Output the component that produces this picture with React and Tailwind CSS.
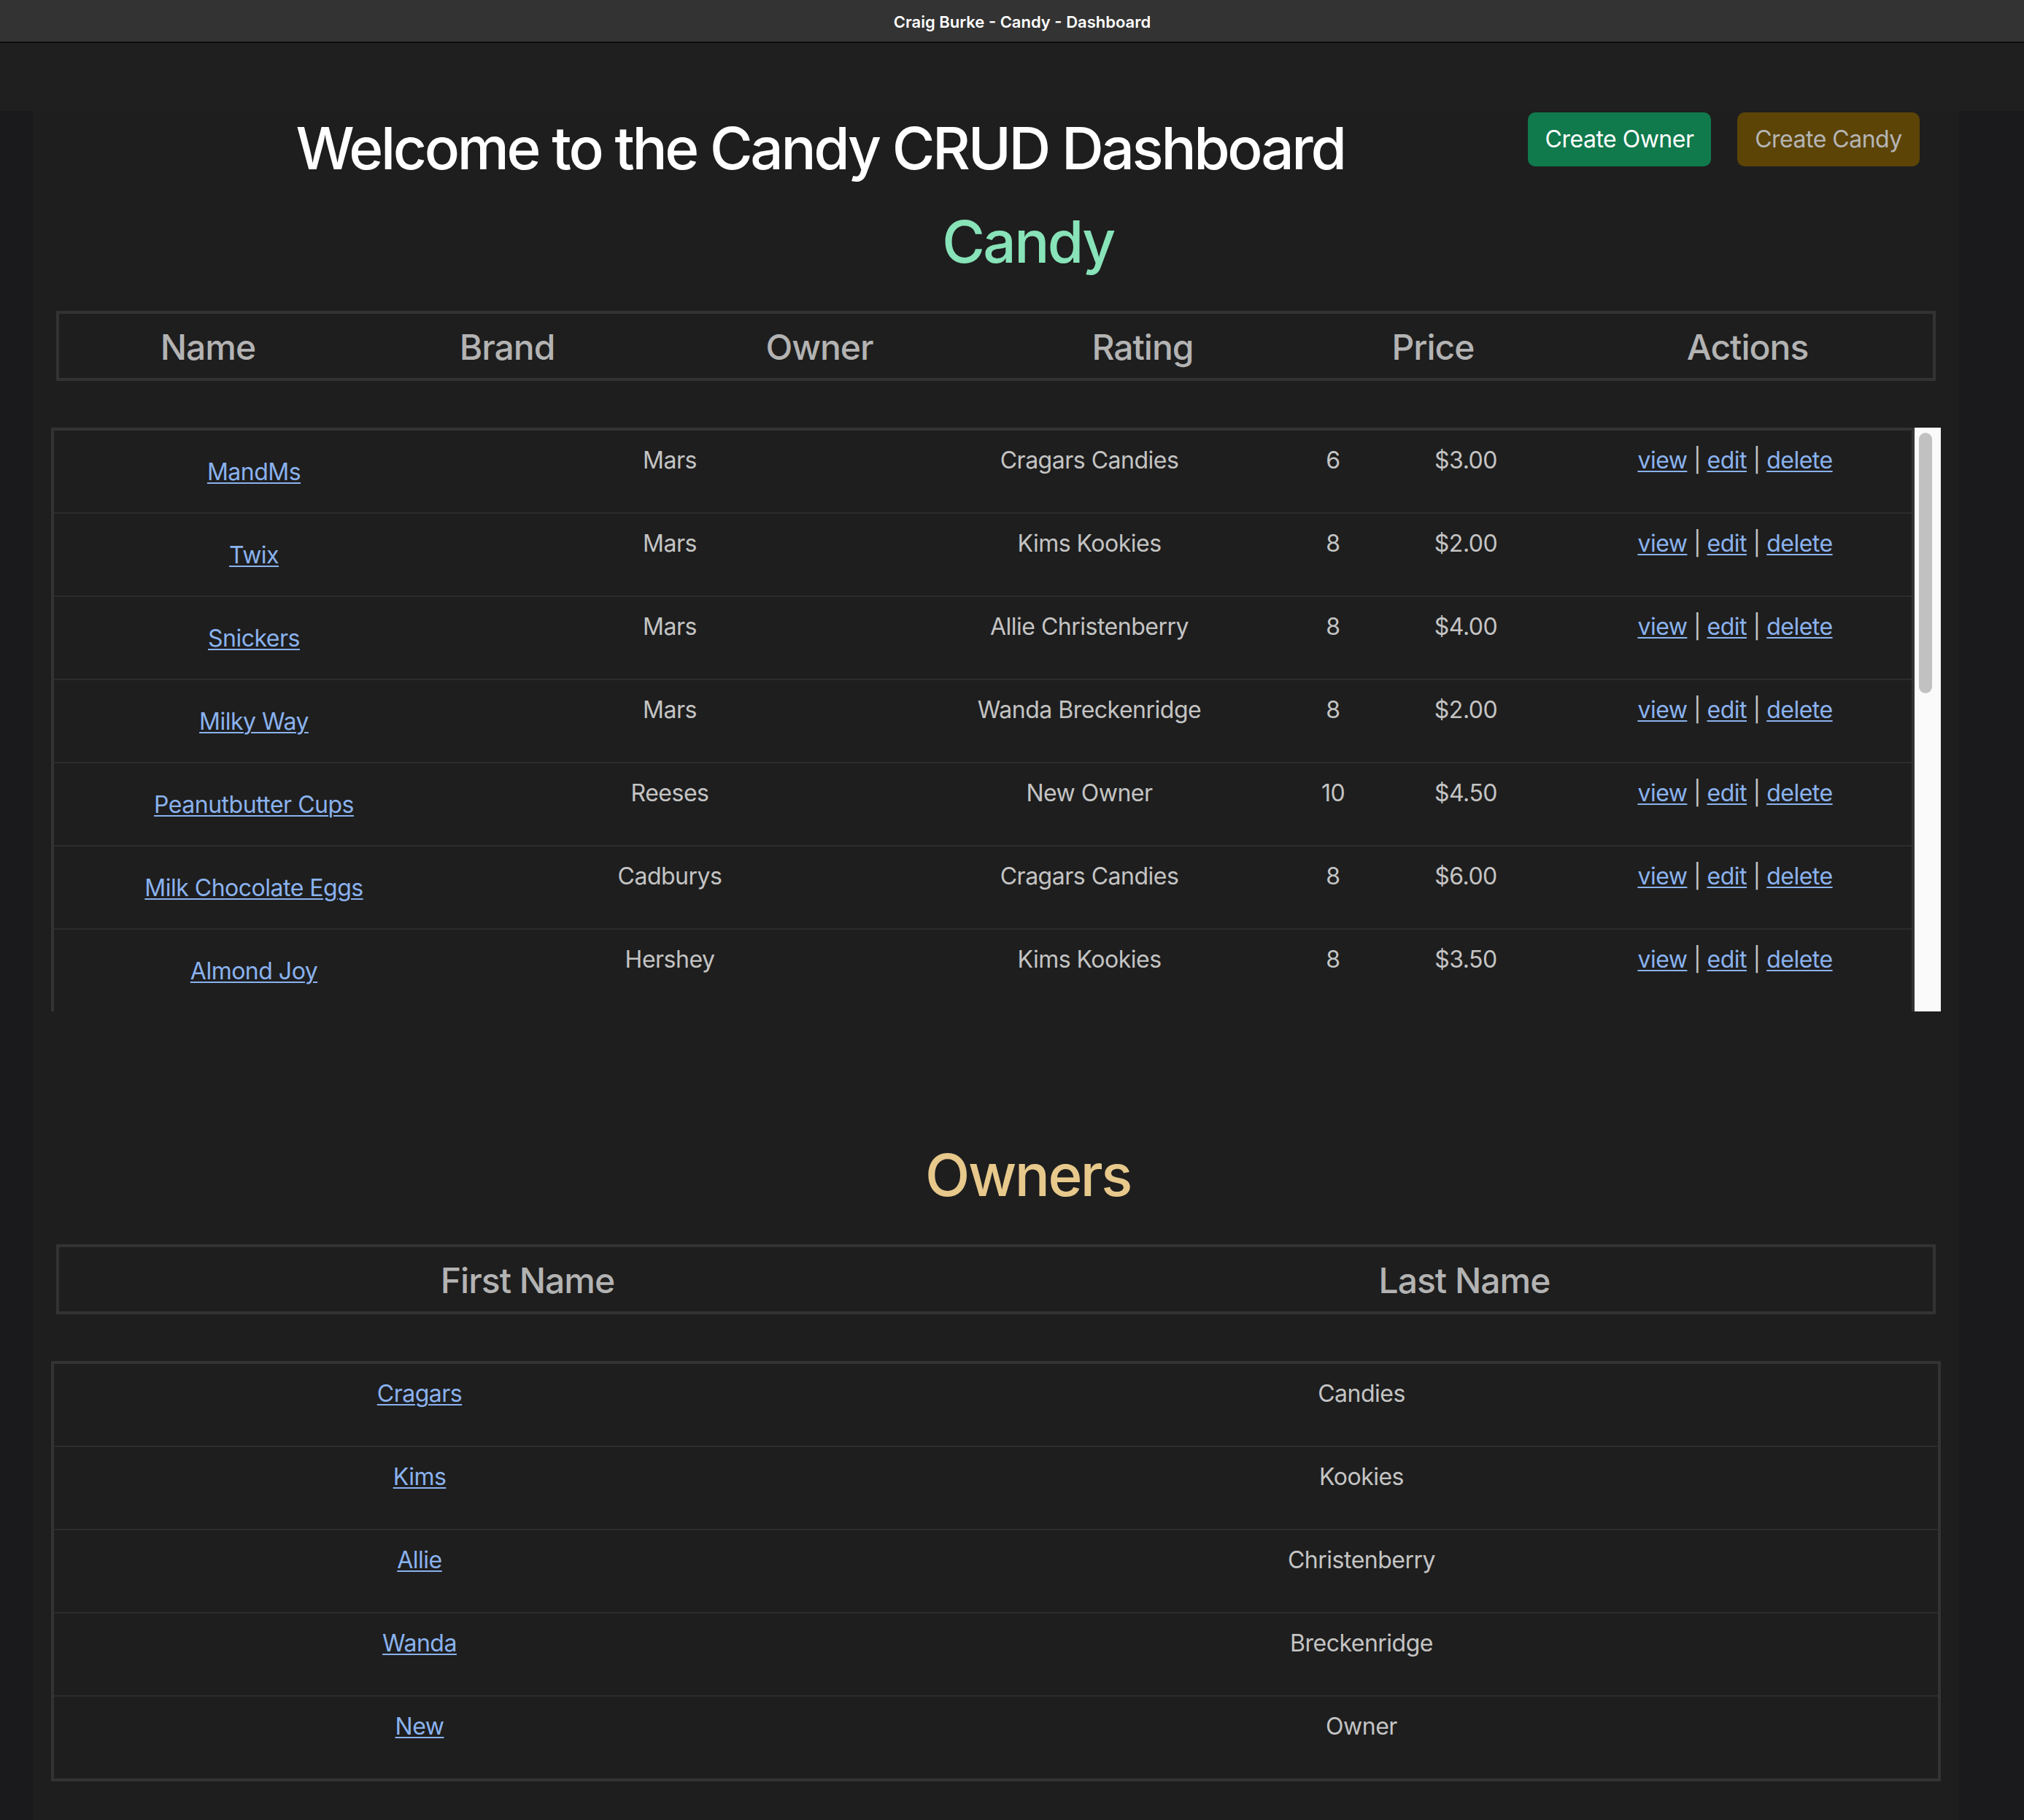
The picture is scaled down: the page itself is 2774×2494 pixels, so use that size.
import React from 'react'

const candies = [
    { name: 'MandMs', brand: 'Mars', owner: 'Cragars Candies', rating: 6, price: '$3.00' },
    { name: 'Twix', brand: 'Mars', owner: 'Kims Kookies', rating: 8, price: '$2.00' },
    { name: 'Snickers', brand: 'Mars', owner: 'Allie Christenberry', rating: 8, price: '$4.00' },
    { name: 'Milky Way', brand: 'Mars', owner: 'Wanda Breckenridge', rating: 8, price: '$2.00' },
    { name: 'Peanutbutter Cups', brand: 'Reeses', owner: 'New Owner', rating: 10, price: '$4.50' },
    { name: 'Milk Chocolate Eggs', brand: 'Cadburys', owner: 'Cragars Candies', rating: 8, price: '$6.00' },
    { name: 'Almond Joy', brand: 'Hershey', owner: 'Kims Kookies', rating: 8, price: '$3.50' },
]

const owners = [
    { first: 'Cragars', last: 'Candies' },
    { first: 'Kims', last: 'Kookies' },
    { first: 'Allie', last: 'Christenberry' },
    { first: 'Wanda', last: 'Breckenridge' },
    { first: 'New', last: 'Owner' },
]

const candyHeaders = ['Name', 'Brand', 'Owner', 'Rating', 'Price', 'Actions']
const candyHeadCols = ['w-[408px]', 'w-[412px]', 'w-[444px]', 'w-[442px]', 'w-[354px]', 'flex-1']

function TextLink({ children }) {
    return (
        <a href="#" className="text-[#8ab2ee] underline decoration-2 underline-offset-[3px]">
            {children}
        </a>
    )
}

function HeaderBox({ children }) {
    return (
        <div className="ml-[7px] mr-[7px] mt-[47px] flex h-[96px] border-4 border-[#333333] text-[48px] font-medium leading-[1.2] tracking-[-1px] text-[#b3b3b3]">
            {children}
        </div>
    )
}

export default function App() {
    return (
        <div className="flex min-h-[2494px] flex-col bg-[#1a1a1d] font-[family-name:Inter,sans-serif]">
            {/* window title bar */}
            <div className="flex h-[59px] items-center justify-center border-b-2 border-[#0b0b0b] bg-[#333333] pl-[28px] pt-[3px] text-[22px] font-semibold text-white">
                Craig Burke - Candy - Dashboard
            </div>
            {/* empty nav band */}
            <div className="h-[93px] bg-[#1f1f1f]" />

            <div className="ml-[45px] w-[2640px] flex-1 bg-[#1e1e1e] px-[25px] pt-[2px]">
                {/* heading row */}
                <div className="flex items-start">
                    <h1 className="mt-[1px] flex-1 pl-[84px] text-center text-[80px] font-medium leading-[1.2] tracking-[-3.3px] text-white">
                        Welcome to the Candy CRUD Dashboard
                    </h1>
                    <div className="mr-[29px] flex gap-[36px]">
                        <button className="h-[74px] w-[251px] rounded-[10px] bg-[#107a4d] text-[32px] tracking-[-0.5px] text-white">Create Owner</button>
                        <button className="h-[74px] w-[250px] rounded-[10px] bg-[#5c4407] text-[32px] tracking-[-0.5px] text-[#b5b5b5]">Create Candy</button>
                    </div>
                </div>

                {/* Candy */}
                <h2 className="mt-[32px] pl-[88px] text-center text-[80px] font-medium leading-[1.2] tracking-[-2.5px] text-[#88e3b9]">Candy</h2>
                <HeaderBox>
                    {candyHeaders.map((h, i) => (
                        <div key={h} className={`${candyHeadCols[i]} pt-[17px] text-center`}>{h}</div>
                    ))}
                </HeaderBox>

                <div className="mt-[64px] flex h-[800px] overflow-hidden">
                    <div className="w-[2554px] border-4 border-b-0 border-[#333333]">
                        {candies.map((c) => (
                            <div key={c.name} className="flex h-[114px] border-b-2 border-[#2c2c2c] text-[32px] leading-[48px] tracking-[-0.5px] text-[#c4c4c4]">
                                <div className="w-[548px] pt-[33px] text-center"><TextLink>{c.name}</TextLink></div>
                                <div className="w-[592px] pt-[17px] text-center">{c.brand}</div>
                                <div className="w-[558px] pt-[17px] text-center">{c.owner}</div>
                                <div className="w-[110px] pt-[17px] text-center">{c.rating}</div>
                                <div className="w-[254px] pt-[17px] text-center">{c.price}</div>
                                <div className="flex-1 pt-[17px] text-center">
                                    <TextLink>view</TextLink> | <TextLink>edit</TextLink> | <TextLink>delete</TextLink>
                                </div>
                            </div>
                        ))}
                    </div>
                    {/* scrollbar */}
                    <div className="w-[36px] bg-[#fafafa] pl-[6px] pt-[7px]">
                        <div className="h-[357px] w-[18px] rounded-full bg-[#c1c1c1]" />
                    </div>
                </div>

                {/* Owners */}
                <h2 className="mt-[176px] pl-[88px] text-center text-[80px] font-medium leading-[1.2] tracking-[-2.5px] text-[#e8c98c]">Owners</h2>
                <HeaderBox>
                    <div className="w-1/2 pt-[17px] text-center">First Name</div>
                    <div className="w-1/2 pt-[17px] text-center">Last Name</div>
                </HeaderBox>

                <div className="mt-[64px] border-4 border-[#333333]">
                    {owners.map((o, i) => (
                        <div
                            key={o.first}
                            className={`flex text-[32px] leading-[48px] tracking-[-0.5px] text-[#c4c4c4] ${i < owners.length - 1 ? 'h-[114px] border-b-2 border-[#2c2c2c]' : 'h-[112px]'}`}
                        >
                            <div className="w-[1002px] pt-[17px] text-center"><TextLink>{o.first}</TextLink></div>
                            <div className="flex-1 pt-[17px] text-center">{o.last}</div>
                        </div>
                    ))}
                </div>
            </div>
        </div>
    )
}
